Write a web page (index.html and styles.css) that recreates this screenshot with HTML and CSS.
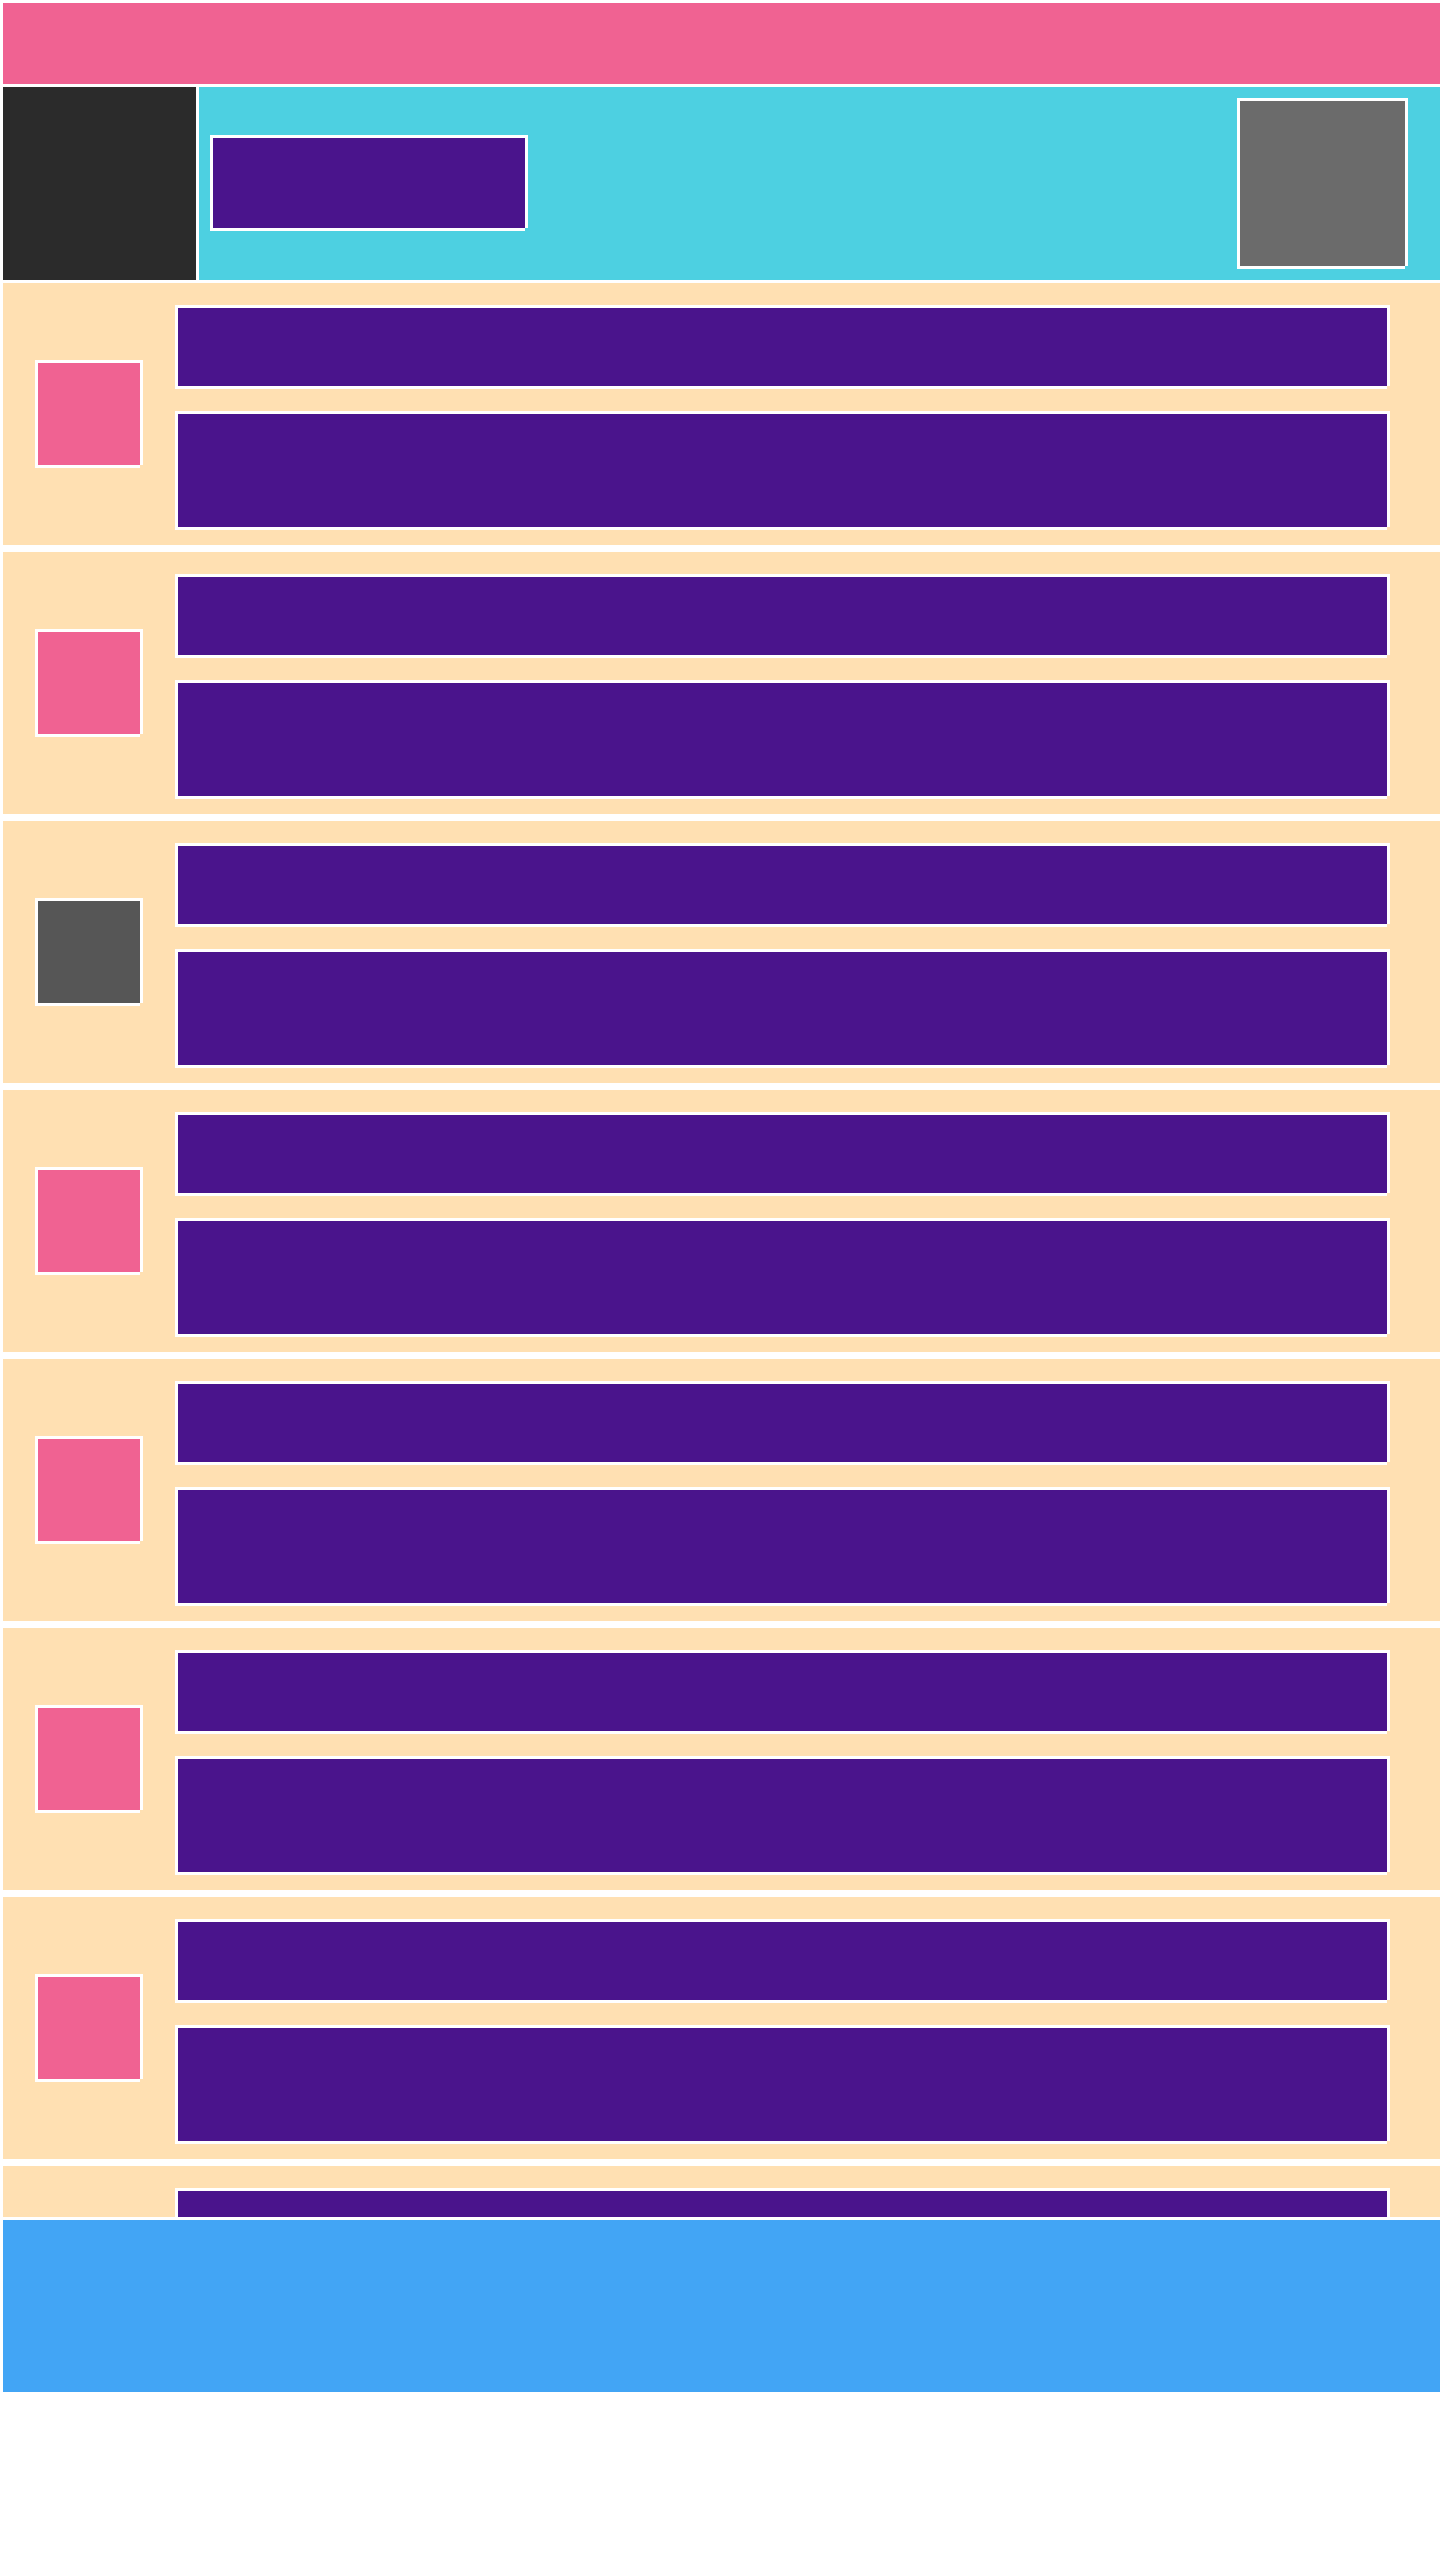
FILE: index.html
```html
<!DOCTYPE html>
<html lang="en">
<head>
    <meta charset="utf-8">
    <meta name="viewport" content="width=device-width, initial-scale=1.0">
    <title>Layout</title>
    <link rel="stylesheet" href="styles.css">
</head>

<body>
    <div class="page">

        <header class="topbar"></header>

        <section class="hero">
            <div class="sidebar"></div>
            <div class="hero-main">
                <div class="block title-box"></div>
                <div class="block avatar"></div>
            </div>
        </section>

        <main class="list">
            <div class="item">
                <div class="block thumb"></div>
                <div class="lines">
                    <div class="block line"></div>
                    <div class="block line tall"></div>
                </div>
            </div>
            <div class="item">
                <div class="block thumb"></div>
                <div class="lines">
                    <div class="block line"></div>
                    <div class="block line tall"></div>
                </div>
            </div>
            <div class="item">
                <div class="block thumb grey"></div>
                <div class="lines">
                    <div class="block line"></div>
                    <div class="block line tall"></div>
                </div>
            </div>
            <div class="item">
                <div class="block thumb"></div>
                <div class="lines">
                    <div class="block line"></div>
                    <div class="block line tall"></div>
                </div>
            </div>
            <div class="item">
                <div class="block thumb"></div>
                <div class="lines">
                    <div class="block line"></div>
                    <div class="block line tall"></div>
                </div>
            </div>
            <div class="item">
                <div class="block thumb"></div>
                <div class="lines">
                    <div class="block line"></div>
                    <div class="block line tall"></div>
                </div>
            </div>
            <div class="item">
                <div class="block thumb"></div>
                <div class="lines">
                    <div class="block line"></div>
                    <div class="block line tall"></div>
                </div>
            </div>
            <div class="item">
                <div class="block thumb"></div>
                <div class="lines">
                    <div class="block line"></div>
                    <div class="block line tall"></div>
                </div>
            </div>
        </main>

        <footer class="footer"></footer>

    </div>
</body>
</html>
```

FILE: styles.css
```css
body {
    margin: 0;
    background-color: #ffffff;
    font-family: "Liberation Sans", Arial, sans-serif;
}

.page {
    display: flex;
    flex-direction: column;
    gap: 3px;
    padding: 3px 0 0 3px;
}

/* white frame: top/left border, right/bottom drawn by shadows */
.block {
    box-sizing: border-box;
    border-top: 3px solid #ffffff;
    border-left: 3px solid #ffffff;
    box-shadow: 3px 0 0 #ffffff, 0 3px 0 #ffffff;
    flex-shrink: 0;
}

.topbar {
    height: 81px;
    background-color: #f06292;
}

.hero {
    display: flex;
    gap: 3px;
    height: 193px;
}

.sidebar {
    width: 193px;
    background-color: #2b2b2b;
}

.hero-main {
    flex: 1;
    display: flex;
    align-items: flex-start;
    justify-content: space-between;
    padding: 11px 35px 0 11px;
    background-color: #4dd0e1;
}

.title-box {
    width: 315px;
    height: 93px;
    margin-top: 37px;
    background-color: #4a148c;
}

.avatar {
    width: 168px;
    height: 168px;
    background-color: #6b6b6b;
}

.list {
    display: flex;
    flex-direction: column;
    gap: 7px;
    height: 1934px;
    overflow: hidden;
}

.item {
    display: flex;
    align-items: flex-start;
    height: 262px;
    flex-shrink: 0;
    padding: 0 53px 0 32px;
    background-color: #ffe0b2;
}

.thumb {
    width: 105px;
    height: 105px;
    margin-top: 77px;
    background-color: #f06292;
}

.thumb.grey {
    background-color: #565656;
}

.lines {
    flex: 1;
    display: flex;
    flex-direction: column;
    gap: 25px;
    margin-left: 35px;
    padding-top: 22px;
}

.line {
    height: 81px;
    background-color: #4a148c;
}

.line.tall {
    height: 116px;
}

.footer {
    height: 172px;
    background-color: #42a5f5;
}
```
